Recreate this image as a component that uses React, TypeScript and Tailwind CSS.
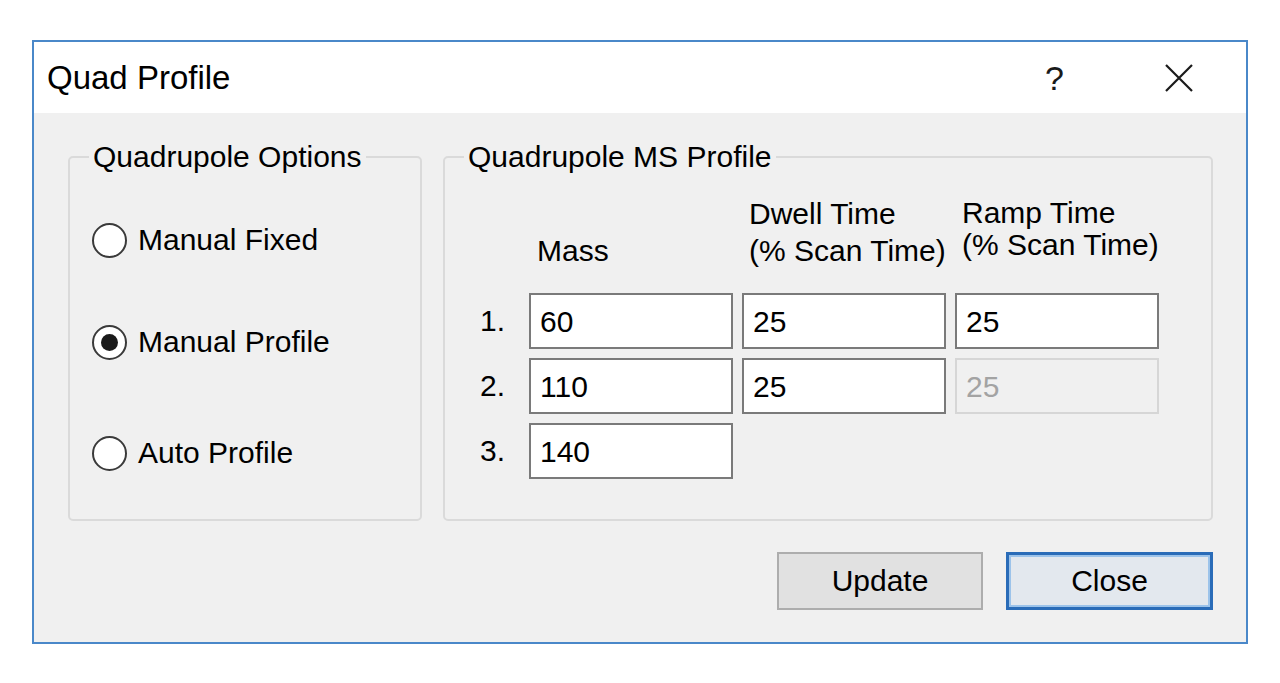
import React from "react";

const text = "font-['Liberation_Sans',Arial,sans-serif] text-[30px] text-black";

function Radio({ label, checked, mt }: { label: string; checked?: boolean; mt: string }) {
  return (
    <div className={`flex items-center h-[36px] gap-[11px] ${mt}`}>
      <div className="w-[35px] h-[35px] rounded-full border-2 border-[#3a3a3a] bg-white flex items-center justify-center">
        {checked && <div className="w-[17px] h-[17px] rounded-full bg-[#1a1a1a]" />}
      </div>
      <span className="leading-[34px]">{label}</span>
    </div>
  );
}

function Field({ value, disabled }: { value: string; disabled?: boolean }) {
  return (
    <div
      className={
        disabled
          ? "h-[56px] border-2 border-[#d6d6d6] bg-[#f0f0f0] text-[#a3a3a3] flex items-center pl-[9px]"
          : "h-[56px] border-2 border-[#7a7a7a] bg-white flex items-center pl-[9px]"
      }
    >
      {value}
    </div>
  );
}

export default function App() {
  const rows = [
    { n: "1.", mass: "60", dwell: "25", ramp: "25" },
    { n: "2.", mass: "110", dwell: "25", ramp: "25", rampDisabled: true },
    { n: "3.", mass: "140" },
  ];

  return (
    <div className={`w-[1280px] h-[683px] bg-white pt-[40px] pl-[32px] ${text}`}>
      <div className="w-[1216px] h-[604px] border-2 border-[#4a88c9] flex flex-col">
        {/* title bar */}
        <div className="h-[71px] bg-white flex items-center pl-[13px]">
          <span className="text-[33px] leading-[40px]">Quad Profile</span>
          <span className="ml-auto text-[34px] leading-[40px] text-[#1a1a1a]">?</span>
          <svg className="ml-[101px] mr-[53px]" width="28" height="28" viewBox="0 0 28 28">
            <path d="M1 1 L27 27 M27 1 L1 27" stroke="#1a1a1a" strokeWidth="2.2" fill="none" />
          </svg>
        </div>

        {/* body */}
        <div className="flex-1 bg-[#f0f0f0] flex flex-col">
          <div className="flex gap-[21px] pl-[34px] pr-[33px] pt-[27px]">
            <fieldset className="w-[354px] h-[381px] border-2 border-[#dadada] rounded-[5px]">
              <legend className="ml-[19px] px-[4px] leading-[34px]">Quadrupole Options</legend>
              <div className="flex flex-col pl-[22px]">
                <Radio label="Manual Fixed" mt="mt-[48px]" />
                <Radio label="Manual Profile" checked mt="mt-[66px]" />
                <Radio label="Auto Profile" mt="mt-[75px]" />
              </div>
            </fieldset>

            <fieldset className="w-[770px] h-[381px] border-2 border-[#dadada] rounded-[5px]">
              <legend className="ml-[19px] px-[4px] leading-[34px]">Quadrupole MS Profile</legend>
              <div className="grid grid-cols-[40px_204px_204px_204px] gap-x-[9px] pl-[35px] h-[119px] items-start">
                <div />
                <div className="pl-[8px] mt-[58px] leading-[37px]">Mass</div>
                <div className="pl-[7px] mt-[21px] leading-[37px]">
                  <div>Dwell Time</div>
                  <div>(% Scan Time)</div>
                </div>
                <div className="pl-[7px] mt-[23px] leading-[32px]">
                  <div>Ramp Time</div>
                  <div>(% Scan Time)</div>
                </div>
              </div>
              <div className="grid grid-cols-[40px_204px_204px_204px] gap-x-[9px] gap-y-[9px] pl-[35px]">
                {rows.map((r) => (
                  <React.Fragment key={r.n}>
                    <div className="h-[56px] flex items-center leading-[34px]">{r.n}</div>
                    <Field value={r.mass} />
                    {r.dwell ? <Field value={r.dwell} /> : <div />}
                    {r.ramp ? <Field value={r.ramp} disabled={r.rampDisabled} /> : <div />}
                  </React.Fragment>
                ))}
              </div>
            </fieldset>
          </div>

          <div className="flex justify-end gap-[23px] pr-[33px] mt-[31px]">
            <button className="w-[206px] h-[58px] bg-[#e1e1e1] border-2 border-[#adadad] leading-[34px]">
              Update
            </button>
            <button className="w-[207px] h-[58px] bg-[#e3e8ee] border-[3px] border-[#2a6cb8] leading-[34px] shadow-[inset_0_0_0_2px_#9cc3ea]">
              Close
            </button>
          </div>
        </div>
      </div>
    </div>
  );
}
